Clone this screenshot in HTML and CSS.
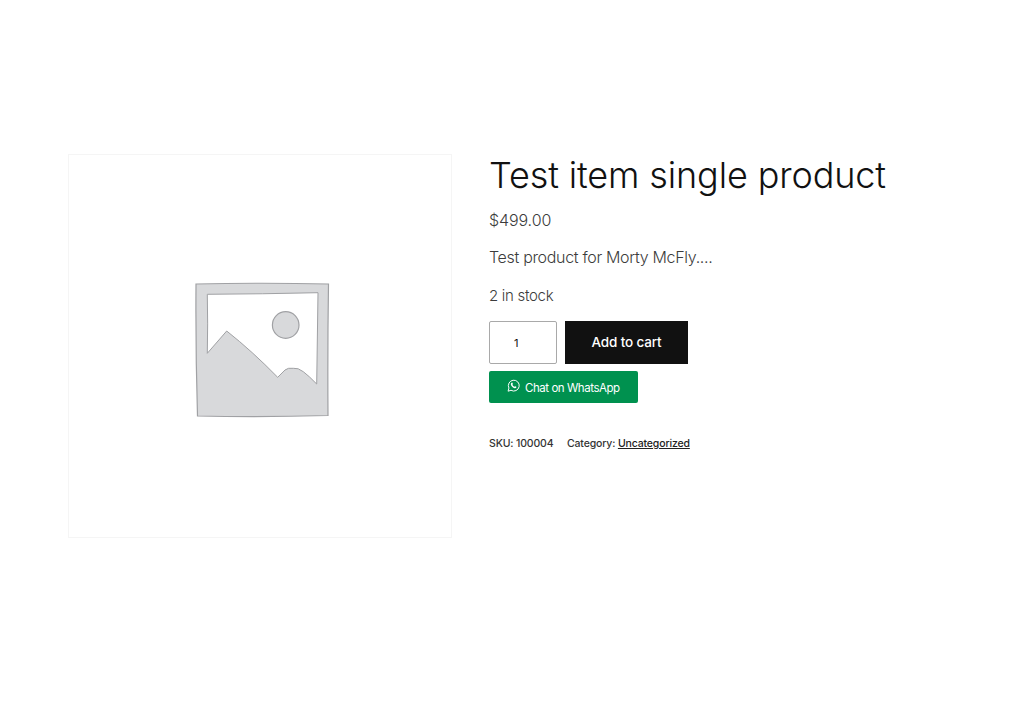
FILE: index.html
```html
<!DOCTYPE html>
<html lang="en">
<head>
<meta charset="utf-8">
<title>Test item single product</title>
<link rel="stylesheet" href="styles.css">
</head>
<body>
<main class="product">
  <div class="gallery">
    <svg class="placeholder" viewBox="69 155 382 382" aria-hidden="true">
      <path class="frame" d="M196 284 Q262 282.500 328.500 284 Q327.500 350 328 415.500 Q262 417.500 197.500 416 Q195.500 350 196 284Z"/>
      <path class="window" d="M207.300 294.300 Q262 294 318 292.700 L316.700 384 Q309 376 303.300 371.700 Q298 367.500 293.300 368.300 Q288 367.500 285 370 L277.700 377.300 Q252 351 226.700 331 L207.300 353.300 Q208 324 207.300 294.300Z"/>
      <circle class="sun" cx="285.700" cy="325" r="13.300"/>
    </svg>
  </div>
  <div class="summary">
    <h1 class="title">Test item single product</h1>
    <p class="price">$499.00</p>
    <p class="desc">Test product for Morty McFly....</p>
    <p class="stock">2 in stock</p>
    <form class="cart">
      <input class="qty" type="number" value="1" aria-label="Quantity">
      <button class="add" type="button">Add to cart</button>
    </form>
    <a class="wa" href="#">
      <svg class="wa-icon" viewBox="0 0 24 24" aria-hidden="true">
        <path class="wa-bubble" d="M2 22.500 L3.600 16.700 A10 10 0 1 1 7.400 20.800 Z"/>
        <path class="wa-phone" d="M8.600 6.800 C9.200 6.300 9.700 6.400 10 7 L10.800 8.900 C11 9.400 10.400 10 10 10.500 C10.700 12.200 12 13.400 13.700 14.100 C14.200 13.700 14.700 13 15.200 13.200 L17.100 14.200 C17.600 14.500 17.500 15.100 17.200 15.800 C16.700 16.800 15.300 17.300 14.200 17 C10.600 16.100 7.800 13.200 7.100 10 C6.800 8.700 7.600 7.400 8.600 6.800Z"/>
      </svg>
      <span class="wa-label">Chat on WhatsApp</span>
    </a>
    <div class="meta">
      <span>SKU: 100004</span>
      <span>Category: <a href="#">Uncategorized</a></span>
    </div>
  </div>
</main>
</body>
</html>
```
FILE: styles.css
```css
* { box-sizing: border-box; }
html, body { margin: 0; background: #fff; }
body { font-family: "Inter", "Liberation Sans", sans-serif; color: #111; height: 720px; overflow: hidden; }
.product { display: flex; align-items: flex-start; gap: 37px; padding: 154px 0 0 68px; }
.gallery { width: 384px; height: 384px; border: 1px solid #f5f5f5; flex: none; }
.placeholder { display: block; width: 382px; height: 382px; }
.frame { fill: #d8d9db; stroke: #a0a1a4; stroke-width: 1.200; }
.window { fill: #fff; stroke: #a0a1a4; stroke-width: 1; }
.sun { fill: #d8d9db; stroke: #a0a1a4; stroke-width: 1.200; }
.summary { flex: none; width: 500px; }
.title { margin: 0; font-size: 36px; line-height: 42px; font-weight: 300; color: #111; letter-spacing: -0.130px; }
.price { margin: 12px 0 0; font-size: 16px; line-height: 24px; font-weight: 300; color: #3c3c3c; letter-spacing: -0.100px; }
.desc { margin: 13px 0 0; font-size: 16px; line-height: 24px; font-weight: 300; color: #3c3c3c; letter-spacing: -0.320px; }
.stock { margin: 15px 0 0; font-size: 15px; line-height: 24px; font-weight: 300; color: #3c3c3c; letter-spacing: -0.300px; }
.cart { display: flex; gap: 8px; margin-top: 13px; }
.qty { width: 68px; height: 43px; padding: 0 0 0 24px; border: 1px solid #a9a9a9; border-radius: 2px; background: #fff; font: 400 11px "Inter", sans-serif; color: #111; appearance: textfield; }
.add { width: 123px; height: 43px; padding: 0 0 1px; border: 0; background: #111; color: #fff; font: 500 13.500px "Inter", sans-serif; letter-spacing: -0.150px; }
.wa { display: flex; align-items: center; width: 149px; height: 32px; margin-top: 7px; padding-left: 18px; gap: 5px; background: #00914f; border-radius: 2px; color: #fff; font-size: 11.500px; font-weight: 400; letter-spacing: -0.450px; text-decoration: none; }
.wa-icon { width: 13px; height: 13px; flex: none; margin-top: -3px; }
.wa-label { margin-top: 2px; }
.wa-bubble { fill: none; stroke: #fff; stroke-width: 1.800; stroke-linejoin: round; }
.wa-phone { fill: #fff; }
.meta { display: flex; gap: 13.500px; margin-top: 34px; font-size: 10.500px; line-height: 14px; font-weight: 500; color: #333; letter-spacing: -0.150px; }
.meta a { color: #222; text-decoration: underline; }
```
